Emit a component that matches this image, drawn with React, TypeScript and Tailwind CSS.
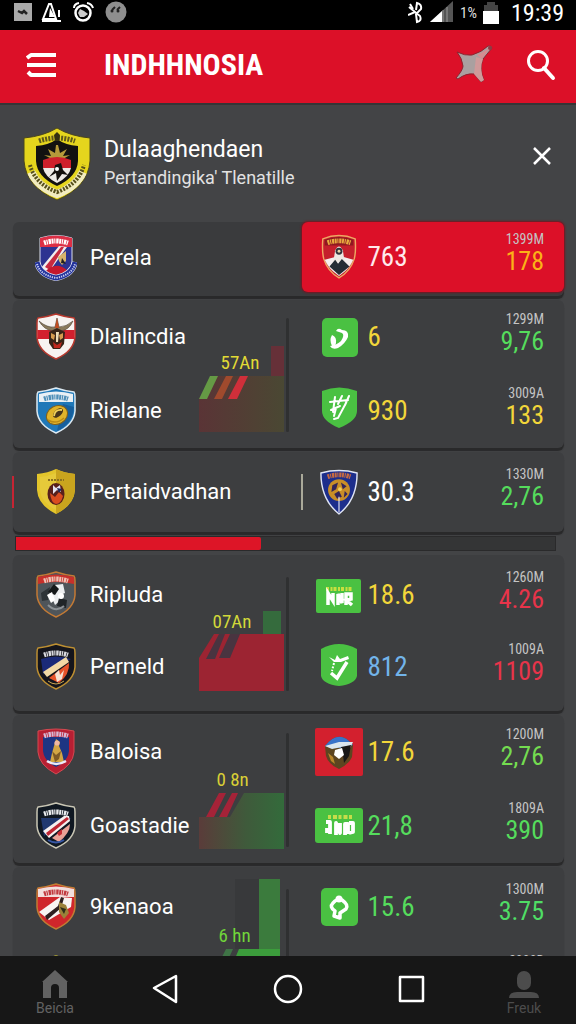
import React from "react";
import clsx from "clsx";

const SHIELD =
  "M21 1 Q30 4 39 5 Q40 6 40 10 V24 Q39 38 21 46 Q3 38 2 24 V10 Q2 6 3 5 Q12 4 21 1Z";

type CrestName =
  | "perela"
  | "dlalin"
  | "rielane"
  | "pertaid"
  | "ripluda"
  | "perneld"
  | "baloisa"
  | "goastadie"
  | "kenaoa"
  | "yellow"
  | "redman"
  | "royal";

function Lettering({ color = "#fff", y = 10 }: { color?: string; y?: number }) {
  return (
    <path
      d={`M9 ${y + 1} Q21 ${y - 3} 33 ${y + 1}`}
      fill="none"
      stroke={color}
      strokeWidth="5"
      strokeDasharray="2 .7 1.2 .8 2.4 .6"
    />
  );
}

const crests: { [name in CrestName]: React.ReactNode } = {
  perela: (
    <>
      <path d="M5 4 Q21 -1 37 4 V28 Q37 40 21 46 Q5 40 5 28Z" fill="#2d3391" stroke="#dbe0ee" />
      <path d="M5 4 Q21 -1 37 4 V13 H5Z" fill="#dc2f45" />
      <Lettering y={8} />
      <path d="M6 34 L24 12 L32 13 L14 38Z" fill="#f3eeee" />
      <path d="M10 33 L26 13 L29 13 L15 36Z" fill="#c72a40" />
      <path d="M23 23 L31 17 L31 27 L27 31 L24 27Z" fill="#d9b36b" />
      <path d="M27 24 L31 30 L26 29Z" fill="#222" />
      <path d="M10 38 Q21 26 33 37 L21 41Z" fill="#c5182d" />
      <path d="M2 28 Q5 41 21 44 Q37 41 40 28" fill="none" stroke="#e6e8f5" strokeWidth="6" />
      <path d="M2 28 Q5 41 21 44 Q37 41 40 28" fill="none" stroke="#22329a" strokeWidth="5" />
      <path d="M2 30 Q5 41 21 44 Q37 41 40 30" fill="none" stroke="#c6cdf0" strokeWidth="2" strokeDasharray="1.3 1" />
    </>
  ),
  dlalin: (
    <>
      <path d={SHIELD} fill="#f7f3f1" stroke="#b8392e" strokeWidth="1.5" />
      <path d="M2.500 17 H39.500 V26 H2.500Z" fill="#d2202e" />
      <path d="M4 8 Q12 15 20 14 L22 5 L24 14 Q31 14 38 8 Q34 17 26 18 H18 Q9 17 4 8Z" fill="#8a7a5c" stroke="#4b3e30" strokeWidth=".6" />
      <path d="M20 15 L22 5 L24 15Z" fill="#c24c22" />
      <path d="M14 19 L22 15 L30 19 L29 31 L25 36 H18 L14 30Z" fill="#3a2418" />
      <path d="M16 20 L20 22 L19 27 L16 25Z M24 22 L28 20 L28 25 L25 27Z" fill="#d79a4e" />
      <path d="M21 19 H24 L23 29 H21Z" fill="#f0dcb6" />
      <path d="M18 29 L22 32 L27 29 L25 35 H19Z" fill="#c1281d" />
    </>
  ),
  rielane: (
    <>
      <path d={SHIELD} fill="#1f78b8" stroke="#dce9f2" strokeWidth="1.5" />
      <path d="M4 7 Q21 2 38 7 V15 H4Z" fill="#e9f0f5" />
      <Lettering y={11} color="#4f8fb8" />
      <path d="M22 44 Q38 37 39 20 L28 17Z" fill="#175f9d" />
      <ellipse cx="22" cy="28" rx="11" ry="9" fill="#e0b32a" stroke="#80601a" transform="rotate(-28 22 28)" />
      <ellipse cx="23" cy="26" rx="6" ry="3.500" fill="#47351b" transform="rotate(-42 23 26)" />
      <path d="M19 29 Q20 22 27 23" fill="none" stroke="#f3d25a" strokeWidth="1.8" />
      <path d="M13 33 Q21 38 29 31" fill="none" stroke="#b98914" strokeWidth="1.5" />
    </>
  ),
  pertaid: (
    <>
      <path d="M21 1 Q29 5 40 6 V22 Q39 37 21 46 Q3 37 2 22 V6 Q13 5 21 1Z" fill="#e3c52b" />
      <path d="M21 1 Q29 5 40 6 V22 Q39 37 21 46Z" fill="#c9a41e" />
      <path d="M5 9 Q14 8 21 5 V42 Q6 34 5 22Z" fill="#e6ca3a" />
      <path d="M13 12 H29" stroke="#8b7120" strokeWidth="2" strokeDasharray="2 1" />
      <ellipse cx="21" cy="26" rx="8.500" ry="11" fill="#58201c" />
      <path d="M15 25 L20 29 L24 24 L28 28 Q26 36 21 36 Q16 35 15 25Z" fill="#d94c20" />
      <path d="M18 17 L21 20 L25 17 L26 24 L22 22 L18 26Z" fill="#e6e4f0" />
      <path d="M22 20 L24 25 L27 21Z" fill="#202b5f" />
    </>
  ),
  ripluda: (
    <>
      <path d={SHIELD} fill="#4f555a" stroke="#c37a35" strokeWidth="1.5" />
      <path d="M3 6 Q21 1 39 6 V13 Q21 9 3 13Z" fill="#c8302a" />
      <Lettering y={9} color="#efc2b5" />
      <path d="M6 22 L15 16 L13 29 L7 30Z" fill="#2e3438" />
      <path d="M20 14 L28 13 L30 22 L25 24 L27 28 L20 34 L17 27Z" fill="#eceef0" />
      <path d="M19 13 L24 18 L20 24 L13 21Z" fill="#15181a" />
      <path d="M12 24 L17 21 L20 29 L16 32Z" fill="#fff" />
      <path d="M24 27 L32 29 L31 37 L22 35Z" fill="#1f2427" />
      <circle cx="26" cy="25" r="3" fill="#fff" />
      <path d="M13 34 Q21 42 29 35" fill="none" stroke="#8c9195" strokeWidth="2" />
    </>
  ),
  perneld: (
    <>
      <path d={SHIELD} fill="#15151c" stroke="#bd8f32" strokeWidth="1.5" />
      <path d="M6 16 Q21 11 36 16 L8 31Z" fill="#1b2a78" />
      <Lettering y={11} color="#d9d9de" />
      <path d="M8 29 L31 14 L34 19 L12 34Z" fill="#f3d9a4" />
      <path d="M14 35 L34 20 Q35 31 24 40Z" fill="#e6532b" />
      <path d="M20 31 L24 27 L25 32 L29 27 L27 36 L22 39Z" fill="#f6e1d3" />
      <path d="M13 38 Q21 44 29 38" stroke="#cba652" fill="none" />
    </>
  ),
  baloisa: (
    <>
      <path d="M3 3 Q21 -1 39 3 V24 Q38 37 21 46 Q4 37 3 24Z" fill="#b81f33" stroke="#d44a51" />
      <path d="M8 9 H34 V23 Q33 33 21 39 Q9 33 8 23Z" fill="#1e3583" />
      <Lettering y={7} color="#d7b8d4" />
      <path d="M21 11 L25 14 L24 18 L27 25 L29 34 H15 L17 25 L19 18Z" fill="#d3a644" />
      <circle cx="22" cy="15" r="2.600" fill="#f0b9a2" />
      <path d="M17 23 L21 27 L26 23 L24 31 L20 34Z" fill="#7f5a24" />
      <path d="M12 33 Q21 39 31 33" fill="none" stroke="#eceaf5" strokeWidth="2.500" />
    </>
  ),
  goastadie: (
    <>
      <path d={SHIELD} fill="#101822" stroke="#c9c6b4" strokeWidth="1.5" />
      <path d="M6 16 H36 L9 34Z" fill="#20386f" />
      <Lettering y={11} color="#e9ebee" />
      <path d="M8 29 L29 14 L34 14 L35 19 L14 36Z" fill="#f5f0ef" />
      <path d="M11 31 L32 15 L34 17 L13 34Z" fill="#bf2633" />
      <path d="M17 36 L35 22 Q35 31 24 40Z" fill="#e9a196" />
      <path d="M22 31 L27 27 V32 L24 34Z" fill="#c62c33" />
      <path d="M13 38 Q21 43 29 38" stroke="#3757a5" strokeWidth="2" fill="none" />
    </>
  ),
  kenaoa: (
    <>
      <path d={SHIELD} fill="#cf262b" stroke="#c07c33" strokeWidth="1.5" />
      <path d="M3 6 Q21 1 39 6 V14 H3Z" fill="#f2dedc" />
      <Lettering y={10} color="#c13a3f" />
      <path d="M4 29 L25 14 L37 15 L36 24 L14 37Z" fill="#f8f4f2" />
      <path d="M10 33 L23 23 L26 14 L29 15 L26 25 L12 37Z" fill="#2e2020" />
      <path d="M24 19 L31 22 L34 30 L29 36 L24 29Z" fill="#9b8139" />
      <path d="M25 24 L31 26 L29 31Z" fill="#2c2c18" />
    </>
  ),
  yellow: <path d={SHIELD} fill="#3d4a24" stroke="#b9ae31" strokeWidth="1.5" />,
  redman: (
    <>
      <path d="M4 5 Q21 -2 38 5 Q39 18 37 26 Q33 39 21 46 Q9 39 5 26 Q3 18 4 5Z" fill="#c51f2c" stroke="#eda862" strokeWidth="1.5" />
      <path d="M6 6 Q21 0 36 6 V12 H6Z" fill="#8f1820" />
      <Lettering y={8} color="#e7a93f" />
      <path d="M6 27 L17 24 H26 L36 27 Q32 37 21 44 Q10 37 6 27Z" fill="#f4eeee" />
      <path d="M17 17 Q21 9 25 17 L27 29 H15Z" fill="#eee8e2" />
      <circle cx="21" cy="18" r="3.600" fill="#30343b" />
      <circle cx="21" cy="18" r="1.500" fill="#e9d5a7" />
      <path d="M11 34 L17 27 L20 31 L24 26 L32 34 L21 43Z" fill="#252d36" />
    </>
  ),
  royal: (
    <>
      <path d="M2 4 Q21 -1 40 4 Q40 32 21 47 Q2 32 2 4Z" fill="#1d2e8c" stroke="#dfe4f4" strokeWidth="1.5" />
      <Lettering y={7} color="#c86a40" />
      <circle cx="21" cy="22" r="11.500" fill="#c98e27" />
      <path d="M14 17 L20 14 L18 21 L13 24Z M23 14 L29 18 L25 21Z M16 26 L21 23 L24 29 L19 31Z M27 23 L30 26 L26 30Z" fill="#33245a" />
      <circle cx="22" cy="21" r="2" fill="#f2cf5c" />
      <path d="M21 29 V45" stroke="#e5e7f5" strokeWidth="1.200" />
    </>
  ),
};

function Crest({ name, className = "w-[42px]" }: { name: CrestName; className?: string }) {
  return (
    <svg viewBox="0 0 42 48" className={clsx("h-12 shrink-0", className)} aria-hidden="true">
      {crests[name]}
    </svg>
  );
}

type BadgeName = "swirl" | "strike" | "grass" | "check" | "eagle" | "crowd" | "leaf" | "redman" | "royal";

function Badge({ name }: { name: BadgeName }) {
  if (name === "redman" || name === "royal") {
    return <Crest name={name} className="w-10" />;
  }
  return (
    <svg viewBox="0 0 48 48" className="size-12" aria-hidden="true">
      {name === "swirl" && (
        <>
          <rect x="7" y="5" width="36" height="39" rx="5" fill="#4ac142" />
          <path d="M21 18 Q23 14 27 17 Q34 17 33 24 Q30 31 23 35 Q17 37 15 33 Q22 32 26 28 Q30 22 27 20 Q24 19 21 18Z" fill="#fff" />
          <path d="M17 22 Q22 24 21 30 Q20 34 17 33 Q14 27 17 22Z" fill="#fff" />
        </>
      )}
      {name === "strike" && (
        <>
          <path d="M7 4 Q24 -3 42 4 V24 Q42 34 24 41 Q7 34 7 24Z" fill="#4ac142" />
          <path d="M20 10 L18 25 M27 9 L23 17 M34 9 L30 18 M15 15 L33 13 M16 23 L25 19 M31 16 L23 31 L19 32 M21 21 L19 29" fill="none" stroke="#fff" strokeWidth="2" strokeLinecap="round" />
        </>
      )}
      {name === "check" && (
        <>
          <path d="M6 6 Q24 -4 42 6 V33 Q40 41 24 43 Q8 41 6 33Z" fill="#4ac142" />
          <path d="M16 30 L22 35 L32 19" fill="none" stroke="#fff" strokeWidth="3.500" />
          <path d="M14 14 L20 17 L22 12 L25 16 L33 13 L34 16 L26 19 L19 19Z" fill="#fff" />
          <path d="M19 20 L17 28" stroke="#fff" strokeWidth="2" strokeDasharray="2 1.500" />
        </>
      )}
      {name === "leaf" && (
        <>
          <rect x="6" y="5" width="37" height="38" rx="5" fill="#4ac142" />
          <path d="M20 18 Q22 16 27 17 Q34 22 31 26 L25 30 L25 35 L19 33 L20 28 Q14 24 18 20Z" fill="none" stroke="#fff" strokeWidth="3.500" strokeLinejoin="round" />
          <circle cx="24" cy="16" r="3.500" fill="#fff" />
        </>
      )}
      {name === "grass" && (
        <>
          <rect x="1" y="8" width="45" height="34" rx="2" fill="#4ac142" />
          <path d="M11 18 H37" stroke="#c8df3f" strokeWidth="4" strokeDasharray="3 1.500 2 1" />
          <path d="M13 34 V22 L18 30 V22 M23 34 V23 L27 32 V22 M31 34 V23 H36 V28 L31 29 L37 34" fill="none" stroke="#fff" strokeWidth="3.500" />
        </>
      )}
      {name === "crowd" && (
        <>
          <rect x="0" y="6" width="48" height="35" rx="3" fill="#4ac142" />
          <path d="M13 15 H37" stroke="#c5dd4a" strokeWidth="4" strokeDasharray="3 2 4 1.500" />
          <path d="M11 20 H15 V32 M12 26 V31 M21 33 V21 L25 31 V21 M30 33 V22 H33 V32 M34 21 H38 V30 L34 31" fill="none" stroke="#fff" strokeWidth="3.800" strokeLinejoin="round" />
        </>
      )}
      {name === "eagle" && (
        <>
          <rect x="0" y="0" width="48" height="48" rx="2" fill="#d3202e" />
          <path d="M10 18 Q24 0 38 17 L37 29 Q34 36 24 41 Q13 36 11 28Z" fill="#5d4520" />
          <path d="M10 18 Q24 0 38 17 L25 20Z" fill="#3973c9" />
          <path d="M10 18 L24 14 L38 14 L35 20 L27 19 L17 21Z" fill="#dce6ee" />
          <path d="M26 19 L36 17 L34 28 L29 35 L28 27Z" fill="#191716" />
          <path d="M20 22 L27 20 L29 27 L24 31 L19 27Z" fill="#fff" />
          <path d="M13 25 L18 29 L20 36 L16 33Z" fill="#b9872a" />
        </>
      )}
    </svg>
  );
}

type Row = {
  crest: CrestName;
  team: string;
  badge?: BadgeName;
  value?: string;
  valueColor?: string;
  meta: string;
  stat?: string;
  statColor?: string;
};

type Group = {
  rows: Row[];
  className?: string;
  rowHeight: string;
  label?: string;
  labelClass?: string;
  chart?: React.ReactNode;
};

const YELLOW = "text-[#f2d63a]";
const GREEN = "text-[#55dc5c]";
const RED = "text-[#e8344a]";

const groups: Group[] = [
  {
    rowHeight: "h-[74px]",
    rows: [
      { crest: "dlalin", team: "Dlalincdia", badge: "swirl", value: "6", valueColor: YELLOW, meta: "1299M", stat: "9,76", statColor: GREEN },
      { crest: "rielane", team: "Rielane", badge: "strike", value: "930", valueColor: YELLOW, meta: "3009A", stat: "133", statColor: YELLOW },
    ],
    label: "57An",
    labelClass: "top-[53px] left-[22px] text-[#e2da35]",
    chart: (
      <>
        <defs>
          <linearGradient id="g1" x1="0" x2="1">
            <stop offset="0" stopColor="#5a3436" />
            <stop offset="1" stopColor="#4a4833" />
          </linearGradient>
        </defs>
        <rect x="72" y="46" width="13" height="30" fill="#663038" />
        <path d="M15 76 H85 V132 H0 V99Z" fill="url(#g1)" />
        <path d="M11 76 H19 L8 99 H0Z" fill="#659a45" />
        <path d="M27 76 H34 L23 99 H15Z" fill="#a04a2d" />
        <path d="M41 76 H49 L38 99 H29Z" fill="#cf2f3a" />
      </>
    ),
  },
  {
    rowHeight: "h-20",
    rows: [
      { crest: "pertaid", team: "Pertaidvadhan", badge: "royal", value: "30.3", valueColor: "text-white", meta: "1330M", stat: "2,76", statColor: GREEN },
    ],
  },
  {
    rowHeight: "h-[72px]",
    className: "pt-1 pb-2",
    rows: [
      { crest: "ripluda", team: "Ripluda", badge: "grass", value: "18.6", valueColor: YELLOW, meta: "1260M", stat: "4.26", statColor: RED },
      { crest: "perneld", team: "Perneld", badge: "check", value: "812", valueColor: "text-[#72b4ea]", meta: "1009A", stat: "1109", statColor: RED },
    ],
    label: "07An",
    labelClass: "top-[53px] left-3.5 text-[#d2d83a]",
    chart: (
      <>
        <rect x="64" y="52" width="18" height="24" fill="#356b3d" />
        <path d="M15 75 H85 V132 H0 V99Z" fill="#9c2432" />
        <path d="M20 75 H26 L16 100 H7Z M31 75 H41 L31 99 H20Z" fill="#493440" />
      </>
    ),
  },
  {
    rowHeight: "h-[74px]",
    rows: [
      { crest: "baloisa", team: "Baloisa", badge: "eagle", value: "17.6", valueColor: YELLOW, meta: "1200M", stat: "2,76", statColor: "text-[#74dc50]" },
      { crest: "goastadie", team: "Goastadie", badge: "crowd", value: "21,8", valueColor: GREEN, meta: "1809A", stat: "390", statColor: GREEN },
    ],
    label: "0 8n",
    labelClass: "top-[55px] left-[18px] text-[#d9cf36]",
    chart: (
      <>
        <defs>
          <linearGradient id="g2" x1="0" x2="1">
            <stop offset="0" stopColor="#5a3c3a" />
            <stop offset=".55" stopColor="#3f5a3b" />
            <stop offset="1" stopColor="#336b3b" />
          </linearGradient>
        </defs>
        <path d="M45 78 H85 V134 H0 V102 H31Z" fill="url(#g2)" />
        <path d="M20 78 H27 L15 102 H7Z M33 78 H39 L28 102 H20Z" fill="#a52338" />
      </>
    ),
  },
  {
    rowHeight: "h-[72px]",
    className: "pt-1",
    rows: [
      { crest: "kenaoa", team: "9kenaoa", badge: "leaf", value: "15.6", valueColor: GREEN, meta: "1300M", stat: "3.75", statColor: "text-[#4fdd65]" },
      { crest: "yellow", team: "", meta: "2000R" },
    ],
    label: "6 hn",
    labelClass: "top-[55px] left-5 text-[#70d63a]",
    chart: (
      <>
        <rect x="36" y="8" width="24" height="70" fill="#38393b" />
        <rect x="60" y="8" width="21" height="71" fill="#3b7b3d" />
        <path d="M40 78 H81 V134 H0 V102 H30Z" fill="#3c9d3c" />
        <path d="M27 78 H34 L23 102 H15Z" fill="#3f7446" />
      </>
    ),
  },
];

function Value({ children, color }: { children?: string; color?: string }) {
  return (
    <span className={clsx("ml-[5px] font-['Roboto_Condensed',Roboto,sans-serif] text-[27px] leading-7", color)}>
      {children}
    </span>
  );
}

function Stat({ meta, stat, statColor }: Pick<Row, "meta" | "stat" | "statColor">) {
  return (
    <div className="ml-auto flex flex-col items-end pb-2 font-['Roboto_Condensed',Roboto,sans-serif]">
      <span className="text-[14px] leading-4 text-[#c4c4c4]">{meta}</span>
      <span className={clsx("h-7 text-[26px] leading-7", statColor)}>{stat}</span>
    </div>
  );
}

function Team({ crest, team, rowHeight }: { crest: CrestName; team: string; rowHeight: string }) {
  return (
    <div className={clsx("flex items-center gap-[13px]", rowHeight)}>
      <Crest name={crest} />
      <span className="text-[22px] leading-7 text-white">{team}</span>
    </div>
  );
}

function GroupCard({ group }: { group: Group }) {
  const single = group.rows.length === 1;
  return (
    <section
      className={clsx(
        "grid grid-cols-2 rounded-md bg-[#3d3e40] shadow-[0_3px_1px_#29292a]",
        group.className
      )}
    >
      <div className="flex min-w-0">
        <div className="flex w-[22px] shrink-0 items-center">
          {single && <span className="-ml-px h-8 w-0.5 bg-[#c62433]" />}
        </div>
        <div className="min-w-0 flex-1 whitespace-nowrap">
          {group.rows.map((row) => (
            <Team key={row.crest} crest={row.crest} team={row.team} rowHeight={group.rowHeight} />
          ))}
        </div>
        {group.chart && (
          <div className="flex items-start">
            <div className="relative w-[85px]">
              <svg viewBox="0 0 85 134" className="h-[134px] w-[85px]" aria-hidden="true">
                {group.chart}
              </svg>
              <span
                className={clsx(
                  "absolute font-['Roboto_Condensed',Roboto,sans-serif] text-[19px] leading-5 whitespace-nowrap",
                  group.labelClass
                )}
              >
                {group.label}
              </span>
            </div>
            <span className="mt-[18px] ml-0.5 h-[114px] w-[3px] rounded-full bg-[#2f3031]" />
          </div>
        )}
      </div>
      <div className="flex items-center">
        <div className="flex w-[26px] shrink-0 justify-center">
          {single && <span className="h-9 w-0.5 bg-[#aaa99a]" />}
        </div>
        <div className="flex-1 pr-5">
          {group.rows.map((row) => (
            <div key={row.meta} className={clsx("flex items-center", group.rowHeight)}>
              <div className="flex w-12 justify-center">{row.badge && <Badge name={row.badge} />}</div>
              <Value color={row.valueColor}>{row.value}</Value>
              <Stat meta={row.meta} stat={row.stat} statColor={row.statColor} />
            </div>
          ))}
        </div>
      </div>
    </section>
  );
}

function StatusBar() {
  return (
    <div className="flex h-[30px] shrink-0 items-center bg-black pr-3 pb-1 pl-3.5 text-white">
      <svg viewBox="0 0 114 24" className="h-6 w-[114px]" aria-hidden="true">
        <rect x="0" y="2" width="18" height="18" fill="#aaa" />
        <path d="M4 10 L8 12 L10 10 L13 13" stroke="#222" strokeWidth="2.500" fill="none" />
        <path d="M29 18 L35 3 H37 L42 18Z" fill="none" stroke="#fff" strokeWidth="2" />
        <path d="M36 7 L41 16 H35Z" fill="#fff" />
        <path d="M45 9 V16 M28 20 H47" stroke="#fff" strokeWidth="2" />
        <circle cx="69" cy="12" r="7.500" fill="none" stroke="#fff" strokeWidth="2.500" />
        <path d="M60 7 Q60 3 65 2 M73 2 Q78 3 79 7" stroke="#fff" strokeWidth="2" fill="none" />
        <path d="M66 8 L70 10 L74 13 L70 16 H66 L64 12Z" fill="#fff" opacity=".8" />
        <circle cx="102" cy="11" r="10.500" fill="#8e8e8e" />
        <path d="M98 9 L101 6 M103 9 L106 6" stroke="#222" strokeWidth="2" />
        <circle cx="98" cy="10" r="1.500" fill="#222" />
        <circle cx="104" cy="10" r="1.500" fill="#222" />
      </svg>
      <svg viewBox="0 0 46 24" className="ml-auto h-6 w-[46px]" aria-hidden="true">
        <path d="M1 6 L12 15 Q14 20 9 21 L8 13 L13 8 Q14 3 9 2 L8 9 M0 14 L7 11 M2 3 L5 8" fill="none" stroke="#fff" strokeWidth="2" />
        <path d="M45 0 V21 H22Z" fill="#555" />
        <path d="M34 10 V21 H22Z" fill="#fff" />
        <path d="M35 21 V9 M39 21 V6" stroke="#999" strokeWidth="1" />
      </svg>
      <span className="ml-1.5 font-['Roboto_Condensed',Roboto,sans-serif] text-[15px] leading-4 text-[#ddd]">1%</span>
      <svg viewBox="0 0 16 22" className="ml-1.5 h-[22px] w-4" aria-hidden="true">
        <path d="M4 0 H12 V3 H15 V10 H1 V3 H4Z" fill="#444" />
        <rect x="0" y="9" width="16" height="13" fill="#fff" />
      </svg>
      <span className="ml-3 font-['Roboto_Condensed',Roboto,sans-serif] text-[24px] leading-6">19:39</span>
    </div>
  );
}

function TopBar() {
  return (
    <header className="flex h-[73px] shrink-0 items-center bg-[#dc1028] pr-5 pb-1 pl-[26px] text-white">
      <button aria-label="Menu" className="w-[78px]">
        <svg viewBox="0 0 31 26" className="h-[26px] w-[31px]" fill="none" stroke="#fff" strokeWidth="4" strokeLinejoin="bevel">
          <path d="M1 6 L5 3 H30 M1 13 H30 M2 20 L5 23 H30" />
        </svg>
      </button>
      <h1 className="font-['Roboto_Condensed',Roboto,sans-serif] text-[30px] leading-10 font-bold">
        INDHHNOSIA
      </h1>
      <button aria-label="Favourite" className="ml-auto">
        <svg viewBox="0 0 40 40" className="size-10">
          <path d="M3 7 Q11 11 18 10 Q28 7 34 1 Q37 0 38 3 L29 14 Q25 24 30 35 L27 37 L20 29 Q12 28 4 34 L2 33 Q9 25 9 21 Q8 13 3 7Z" fill="#aaa0a0" stroke="#8c2530" />
          <path d="M22 12 L29 14 Q25 24 30 35 L27 37 L20 29Z" fill="#cf9a9a" />
          <path d="M23 10 L36 3 L28 14Z" fill="#d38d91" />
          <circle cx="36" cy="3" r="2" fill="#8f3b45" />
        </svg>
      </button>
      <button aria-label="Search" className="ml-8">
        <svg viewBox="0 0 30 32" className="h-8 w-[30px]" fill="none" stroke="#fff">
          <circle cx="12" cy="12" r="9.500" strokeWidth="3" />
          <path d="M18 19 L27 29" strokeWidth="4" strokeLinecap="round" />
        </svg>
      </button>
    </header>
  );
}

function LeagueHeader() {
  return (
    <div className="flex h-[117px] items-center pr-2.5 pl-2.5">
      <svg viewBox="0 0 68 74" className="h-[74px] w-[68px] shrink-0" aria-hidden="true">
        <path d="M34 1 Q47 9 67 11 V34 Q65 60 34 73 Q3 60 1 34 V11 Q21 9 34 1Z" fill="#e5d51d" stroke="#4b461e" />
        <path d="M8 45 Q15 60 34 67 Q53 60 60 45" fill="none" stroke="#f2ecc0" strokeWidth="8" />
        <path d="M7 38 Q12 57 34 65 Q56 57 61 38" fill="none" stroke="#57501b" strokeWidth="4" strokeDasharray="2 1.300" />
        <path d="M13 19 Q26 18 34 12 Q42 18 55 19 V34 Q54 50 34 59 Q14 50 13 34Z" fill="#121110" />
        <path d="M16 14 Q34 8 52 14" fill="none" stroke="#5e581c" strokeWidth="5" strokeDasharray="2 1.200" />
        <path d="M31 8 L34 5 L37 8 L36 14 H32Z" fill="#343112" />
        <path d="M33 18 L35 18 L37 26 L44 22 L40 29 L47 28 L40 32 H29 L21 28 L28 29 L25 22 L32 26Z" fill="#b69a3a" />
        <path d="M20 33 Q34 27 48 33 V41 H20Z" fill="#cf202b" />
        <path d="M20 41 H48 Q46 50 34 56 Q22 50 20 41Z" fill="#eeeae6" />
        <path d="M32 38 L38 36 L40 43 L45 48 L39 47 L34 54 L33 46 L26 50 L31 44Z" fill="#14100e" />
        <circle cx="34" cy="42" r="2" fill="#fff" />
      </svg>
      <div className="ml-[13px]">
        <h2 className="text-[23px] leading-7 text-white">Dulaaghendaen</h2>
        <p className="text-[18px] leading-7 text-[#e2e2e2]">Pertandingika' Tlenatille</p>
      </div>
      <button aria-label="Close" className="mb-4 ml-auto">
        <svg viewBox="0 0 24 24" className="size-6" stroke="#fff" strokeWidth="2.500">
          <path d="M4 4 L20 20 M20 4 L4 20" />
        </svg>
      </button>
    </div>
  );
}

function NavBar() {
  return (
    <nav className="flex h-[68px] shrink-0 items-stretch bg-[#171717]">
      <button className="flex w-26 flex-col items-center pt-3.5 pl-1.5 text-[#626262]">
        <svg viewBox="0 0 26 28" className="h-7 w-[26px]" fill="currentColor" aria-hidden="true">
          <path d="M13 0 L26 12 H25 V28 H17 V18 Q17 14 13 14 Q9 14 9 18 V28 H1 V12 H0Z" />
        </svg>
        <span className="text-[14px] leading-5">Beicia</span>
      </button>
      <button aria-label="Back" className="flex flex-1 justify-center pt-[18px]">
        <svg viewBox="0 0 28 30" className="h-[30px] w-7" fill="none" stroke="#fff" strokeWidth="2.500" strokeLinejoin="round">
          <path d="M25 2 V28 L3 14Z" />
        </svg>
      </button>
      <button aria-label="Home" className="flex flex-1 justify-center pt-[18px]">
        <svg viewBox="0 0 30 30" className="size-[30px]" fill="none" stroke="#fff" strokeWidth="2.500">
          <circle cx="15" cy="15" r="13" />
        </svg>
      </button>
      <button aria-label="Recent apps" className="flex flex-1 justify-center pt-[18px]">
        <svg viewBox="0 0 30 30" className="size-[30px]" fill="none" stroke="#fff" strokeWidth="2.500" strokeLinejoin="round">
          <rect x="4" y="3" width="23" height="24" />
        </svg>
      </button>
      <button className="flex w-26 flex-col items-center pt-3.5 text-[#4c4c4c]">
        <svg viewBox="0 0 32 28" className="h-7 w-8" fill="currentColor" aria-hidden="true">
          <rect x="9" y="1" width="14" height="19" rx="7" />
          <path d="M1 28 Q1 22 9 22 H23 Q31 22 31 28Z" />
        </svg>
        <span className="text-[14px] leading-5">Freuk</span>
      </button>
    </nav>
  );
}

export default function App() {
  return (
    <div className="flex h-screen flex-col overflow-hidden bg-[#434446] font-[Roboto,sans-serif]">
      <StatusBar />
      <TopBar />
      <main className="min-h-0 flex-1 overflow-hidden border-t-2 border-[#353536] pr-3 pl-[13px]">
        <LeagueHeader />
        <div className="flex flex-col gap-1">
          <section className="grid grid-cols-2 rounded-md bg-[#3a3b3d] shadow-[0_3px_1px_#29292a]">
            <div className="pl-[22px]">
              <Team crest="perela" team="Perela" rowHeight="h-[72px]" />
            </div>
            <div className="mb-1 ml-[13px] flex h-[70px] items-center rounded-md bg-[#dc1028] pr-5 pl-[13px] shadow-[0_0_2px_1px_#7a1420]">
              <div className="flex w-12 justify-center">
                <Badge name="redman" />
              </div>
              <Value color="text-[#ffe9ec]">763</Value>
              <Stat meta="1399M" stat="178" statColor="text-[#fbb117]" />
            </div>
          </section>
          {groups.map((group, i) => (
            <React.Fragment key={group.rows[0].team}>
              <GroupCard group={group} />
              {i === 1 && (
                <div
                  role="progressbar"
                  aria-label="Progress"
                  aria-valuenow={45}
                  className="mr-2 ml-0.5 flex h-[15px] border border-[#2a2a2b] bg-[#343536]"
                >
                  <div className="rounded-r-xs bg-[#dd1527]" style={{ width: "45.5%" }} />
                </div>
              )}
            </React.Fragment>
          ))}
        </div>
      </main>
      <NavBar />
    </div>
  );
}
